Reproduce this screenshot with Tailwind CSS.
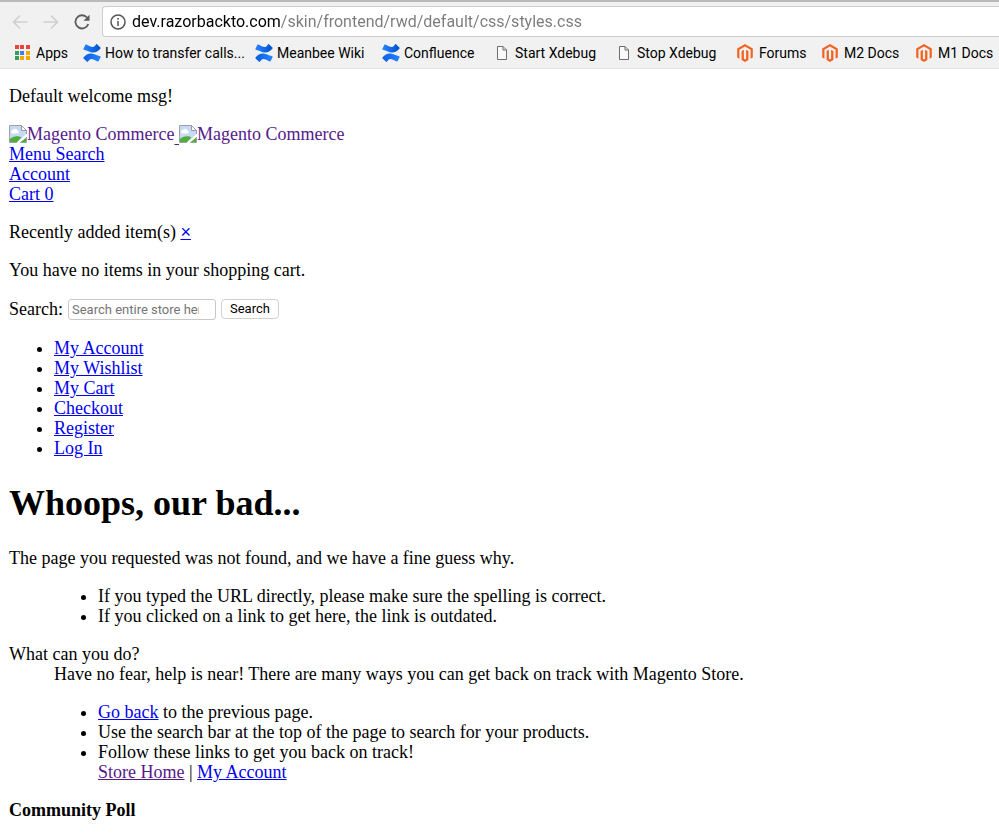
<!DOCTYPE html>
<html lang="en">
<head>
    <meta charset="UTF-8">
    <meta name="viewport" content="width=device-width, initial-scale=1.0">
    <title>404 Not Found</title>
    <script src="https://cdn.jsdelivr.net/npm/@tailwindcss/browser@4"></script>
</head>
<body class="bg-white text-black">
    <!-- Icon symbols -->
    <svg class="absolute h-0 w-0" xmlns="http://www.w3.org/2000/svg">
        <defs>
            <linearGradient id="blueTop" x1="1" y1="0" x2="0" y2="0">
                <stop offset="0" stop-color="#2684ff"/>
                <stop offset="1" stop-color="#0a5ee0"/>
            </linearGradient>
            <linearGradient id="blueBottom" x1="0" y1="0" x2="1" y2="0">
                <stop offset="0" stop-color="#2684ff"/>
                <stop offset="1" stop-color="#0052cc"/>
            </linearGradient>
        </defs>
        <symbol id="confluence" viewBox="0 0 18 18">
            <path fill="url(#blueBottom)" d="M.4 4.800 2.300.9C2.500.5 2.900.4 3.300.6l3.500 1.600C9.800 3.500 10.800 3.300 13 .4c.3-.4.7-.4 1-.1l3.400 3.200c.3.300.4.700.1 1C13.800 9 10.500 9.700 4.800 7.100L.8 5.700C.4 5.500.2 5.200.4 4.800z"/>
            <path fill="url(#blueTop)" d="M17.600 13.200l-1.900 3.900c-.2.400-.6.500-1 .3l-3.500-1.600c-3-1.300-4-1.100-6.200 1.800-.3.400-.7.400-1 .1L.6 14.500c-.3-.3-.4-.7-.1-1 3.700-4.500 7-5.200 12.700-2.600l4 1.400c.4.200.6.500.4.900z"/>
        </symbol>
        <symbol id="magento" viewBox="0 0 16 18">
            <path fill="#f26322" d="M8 0 .2 4.500v9l2.200 1.300v-9L8 2.600l5.600 3.200v9l2.200-1.300v-9z"/>
            <path fill="#f26322" d="M9.100 14.700 8 15.400l-1.100-.7V5.800L4.600 7.100v9L8 18l3.400-1.900v-9L9.100 5.800z"/>
        </symbol>
        <symbol id="page" viewBox="0 0 10 14">
            <path fill="#fafafa" stroke="#6e6e6e" d="M.5.500h5.500l3.500 3.500v9.500h-9z"/>
            <path fill="none" stroke="#6e6e6e" d="M6 .5v3.500h3.500"/>
        </symbol>
        <symbol id="broken" viewBox="0 0 18 18">
            <path fill="#c6d9f7" d="M.5.500h12l5 5v3.500l-9 8.500h-8z"/>
            <path fill="#fff" d="M3 8.500a1.800 1.800 0 0 1 .8-3.400 2.500 2.500 0 0 1 4.600.5A1.500 1.500 0 0 1 8.800 8.500z"/>
            <path fill="#4caf3a" d="M1 17.500v-3.500c2-2.500 8-4 11.500-1.500l-5 5zM11 17.500l6-5v5z"/>
            <path fill="#fff" d="M18 8.500v3L10 18H7.500z"/>
            <path fill="#fff" stroke="#9a9a9a" d="M12.500.500v5h5z"/>
            <path fill="none" stroke="#a0a0a0" d="M8 17.500H.5V.500h12l5 5v3.500M17.500 12v5.500H11"/>
        </symbol>
    </svg>

    <!-- Browser toolbar -->
    <header class="border-t-2 border-b border-t-[#bababa] border-b-[#e2e2e2] bg-[#f1f1f1] font-['Roboto',sans-serif]">
        <div class="flex items-center pt-1 pl-3">
            <div class="mr-3 flex items-center gap-[15px]">
                <button type="button" aria-label="Back" disabled>
                    <svg class="h-4 w-4" viewBox="0 0 16 16" fill="none" stroke="#cfcfcf" stroke-width="1.600"><path d="M15.500 8H2M8 1.500 1.500 8 8 14.500"/></svg>
                </button>
                <button type="button" aria-label="Forward" disabled>
                    <svg class="h-4 w-4" viewBox="0 0 16 16" fill="none" stroke="#cfcfcf" stroke-width="1.600"><path d="M.5 8H14M8 1.500 14.500 8 8 14.500"/></svg>
                </button>
                <button type="button" aria-label="Reload">
                    <svg class="h-4 w-4" viewBox="0 0 16 16"><path fill="none" stroke="#5a5a5a" stroke-width="1.800" d="M13 3.500A6.600 6.600 0 1 0 14.300 10"/><path fill="#5a5a5a" d="M15.500.800v6H9.500z"/></svg>
                </button>
            </div>
            <div class="flex h-[31px] min-w-0 flex-1 items-center gap-[6px] rounded-l border border-r-0 border-[#cdcdcd] bg-white pl-[7px]">
                <svg class="h-4 w-4 shrink-0" viewBox="0 0 16 16" fill="none" stroke="#555" stroke-width="1.500"><circle cx="8" cy="8" r="7"/><path d="M8 7v5M8 4v1.700"/></svg>
                <input type="text" aria-label="Address" value="dev.razorbackto.com/skin/frontend/rwd/default/css/styles.css" class="min-w-0 flex-1 bg-[linear-gradient(90deg,#000_149px,#7a7a7a_149px)] bg-clip-text text-base text-transparent outline-none">
            </div>
        </div>
        <nav class="grid h-[31px] grid-cols-[69px_172px_127px_115px_122px_118px_85px_94px_1fr] items-center overflow-hidden pl-[14px] text-sm whitespace-nowrap">
            <a href="#" class="flex items-center gap-[6px]">
                <svg class="h-4 w-4" viewBox="0 0 16 16">
                    <path fill="#e8453c" d="M1 0h4v4H1zM6 0h4v4H6zM12 0h4v4h-4z"/>
                    <path fill="#34a05a" d="M1 6h4v4H1zM1 11h4v4H1z"/>
                    <path fill="#3b82f0" d="M6 6h4v4H6z"/>
                    <path fill="#f5a800" d="M12 6h4v4h-4zM6 11h4v4H6zM12 11h4v4h-4z"/>
                </svg>
                Apps
            </a>
            <a href="#" class="flex items-center gap-1"><svg class="h-[18px] w-[18px]"><use href="#confluence"/></svg>How to transfer calls...</a>
            <a href="#" class="flex items-center gap-1"><svg class="h-[18px] w-[18px]"><use href="#confluence"/></svg>Meanbee Wiki</a>
            <a href="#" class="flex items-center gap-1"><svg class="h-[18px] w-[18px]"><use href="#confluence"/></svg>Confluence</a>
            <a href="#" class="flex items-center gap-2"><svg class="h-[14px] w-[10px]"><use href="#page"/></svg>Start Xdebug</a>
            <a href="#" class="flex items-center gap-2"><svg class="h-[14px] w-[10px]"><use href="#page"/></svg>Stop Xdebug</a>
            <a href="#" class="flex items-center gap-[6px]"><svg class="h-[18px] w-4"><use href="#magento"/></svg>Forums</a>
            <a href="#" class="flex items-center gap-[6px]"><svg class="h-[18px] w-4"><use href="#magento"/></svg>M2 Docs</a>
            <a href="#" class="flex items-center gap-[6px]"><svg class="h-[18px] w-4"><use href="#magento"/></svg>M1 Docs</a>
        </nav>
    </header>

    <!-- Page content -->
    <main class="px-[9px] py-[17px] font-['Liberation_Serif',serif] text-lg/5">
        <p class="mb-[18px]">Default welcome msg!</p>

        <a href="#" class="block h-5 text-[#551a8b] underline"><span class="inline-flex items-center"><svg class="h-[18px] w-[18px]"><use href="#broken"/></svg>Magento Commerce</span> <span class="inline-flex items-center"><svg class="h-[18px] w-[18px]"><use href="#broken"/></svg>Magento Commerce</span></a>
        <div><a href="#" class="text-[#0000ee] underline">Menu </a><a href="#" class="text-[#0000ee] underline">Search</a></div>
        <div><a href="#" class="text-[#0000ee] underline">Account</a></div>
        <div><a href="#" class="text-[#0000ee] underline">Cart 0</a></div>

        <p class="my-[18px]">Recently added item(s) <a href="#" class="font-['Liberation_Sans',sans-serif] text-[#0000ee] underline">×</a></p>
        <p class="mb-[18px]">You have no items in your shopping cart.</p>

        <form class="flex h-[22px] items-center">
            <label for="search" class="mr-[5px]">Search:</label>
            <input id="search" type="text" placeholder="Search entire store here..." class="mr-[5px] h-[21px] w-[148px] rounded-[3px] border border-[#c8c8c8] pr-4 pl-[3px] font-['Roboto',sans-serif] text-[13px] placeholder:text-[#757575]">
            <button type="button" class="h-5 rounded border border-[#d0d0d0] bg-white px-2 font-['Roboto',sans-serif] text-[13px]/4">Search</button>
        </form>

        <ul class="mt-[18px] list-disc pl-[45px]">
            <li><a href="#" class="text-[#0000ee] underline">My Account</a></li>
            <li><a href="#" class="text-[#0000ee] underline">My Wishlist</a></li>
            <li><a href="#" class="text-[#0000ee] underline">My Cart</a></li>
            <li><a href="#" class="text-[#0000ee] underline">Checkout</a></li>
            <li><a href="#" class="text-[#0000ee] underline">Register</a></li>
            <li><a href="#" class="text-[#0000ee] underline">Log In</a></li>
        </ul>

        <h1 class="my-[25px] text-4xl/10 font-bold">Whoops, our bad...</h1>

        <dl>
            <dt>The page you requested was not found, and we have a fine guess why.</dt>
            <dd class="my-[18px] pl-[45px]">
                <ul class="list-disc pl-11">
                    <li>If you typed the URL directly, please make sure the spelling is correct.</li>
                    <li>If you clicked on a link to get here, the link is outdated.</li>
                </ul>
            </dd>
        </dl>
        <dl>
            <dt>What can you do?</dt>
            <dd class="pl-[45px]">Have no fear, help is near! There are many ways you can get back on track with Magento Store.</dd>
            <dd class="my-[18px] pl-[45px]">
                <ul class="list-disc pl-11">
                    <li><a href="#" class="text-[#0000ee] underline">Go back</a> to the previous page.</li>
                    <li>Use the search bar at the top of the page to search for your products.</li>
                    <li>Follow these links to get you back on track!<br>
                        <a href="#" class="text-[#551a8b] underline">Store Home</a> | <a href="#" class="text-[#0000ee] underline">My Account</a></li>
                </ul>
            </dd>
        </dl>

        <strong>Community Poll</strong>
    </main>
</body>
</html>
